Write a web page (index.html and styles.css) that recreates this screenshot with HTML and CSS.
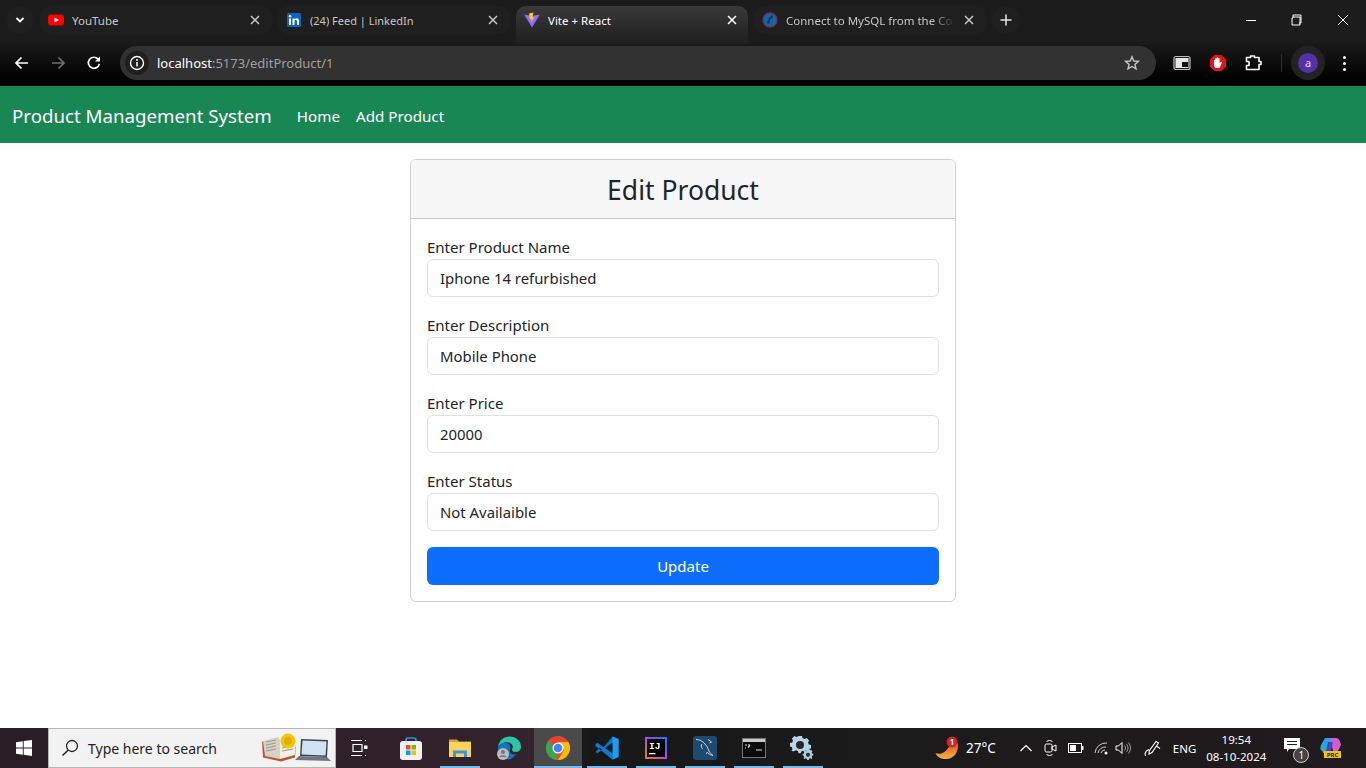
FILE: index.html
```html
<!DOCTYPE html>
<html lang="en">
<head>
<meta charset="utf-8">
<title>Vite + React</title>
<link rel="stylesheet" href="styles.css">
</head>
<body>
<div class="browser">
  <div class="tabstrip">
    <div class="tab-menu"><svg width="12" height="12" viewBox="0 0 12 12"><path d="M2.5 4l3.500 3.500L9.500 4" fill="none" stroke="#fff" stroke-width="1.800"/></svg></div>
    <div class="tab">
      <svg class="fav" width="16" height="16" viewBox="0 0 16 16"><rect y="2.500" width="16" height="11" rx="3" fill="#f00"/><path d="M6.500 5.500v5L11 8z" fill="#fff"/></svg>
      <span class="tab-title">YouTube</span>
      <svg class="tab-x" width="10" height="10" viewBox="0 0 10 10"><path d="M1 1l8 8M9 1l-8 8" stroke="#c7c7c7" stroke-width="1.500"/></svg>
    </div>
    <div class="tab">
      <svg class="fav" width="16" height="16" viewBox="0 0 16 16"><rect x="1" y="1" width="14" height="14" rx="1.500" fill="#0a66c2"/><rect x="3" y="6.500" width="2" height="6.500" fill="#fff"/><circle cx="4" cy="4.300" r="1.200" fill="#fff"/><path d="M6.500 6.500h2v1c.5-.8 1.300-1.200 2.200-1.200 1.700 0 2.300 1.100 2.300 2.900V13h-2V9.600c0-.9-.3-1.500-1.100-1.500-.9 0-1.400.6-1.400 1.600V13h-2z" fill="#fff"/></svg>
      <span class="tab-title tab-title-tight">(24) Feed | LinkedIn</span>
      <svg class="tab-x" width="10" height="10" viewBox="0 0 10 10"><path d="M1 1l8 8M9 1l-8 8" stroke="#c7c7c7" stroke-width="1.500"/></svg>
    </div>
    <div class="tab tab-active">
      <svg class="fav" width="16" height="16" viewBox="0 0 16 16"><path d="M0 2.500L8 4l8-1.500L8 15.500z" fill="#7c6cf5"/><path d="M1.500 3.200L8 4.300l6.500-1.100L8 13.500z" fill="#9a6af0"/><path d="M9.500.5L5 1.500l.8 6 1.700-.4-.5 3.500 3.500-5.500-2 .4z" fill="#ffc81f"/></svg>
      <span class="tab-title">Vite + React</span>
      <svg class="tab-x" width="10" height="10" viewBox="0 0 10 10"><path d="M1 1l8 8M9 1l-8 8" stroke="#fff" stroke-width="1.500"/></svg>
    </div>
    <div class="tab">
      <svg class="fav" width="16" height="16" viewBox="0 0 16 16"><circle cx="8" cy="8" r="7.200" fill="#0f66a8" stroke="#8c2430" stroke-width="1.100"/><path d="M10.500 3L7 6 5 11l2 1 1.500-5 2.500-2z" fill="#0b2e4e"/></svg>
      <span class="tab-title tab-fade">Connect to MySQL from the Co</span>
      <svg class="tab-x" width="10" height="10" viewBox="0 0 10 10"><path d="M1 1l8 8M9 1l-8 8" stroke="#c7c7c7" stroke-width="1.500"/></svg>
    </div>
    <div class="new-tab"><svg width="12" height="12" viewBox="0 0 12 12"><path d="M6 .5v11M.5 6h11" stroke="#e3e3e3" stroke-width="1.500"/></svg></div>
    <div class="win-controls">
      <svg width="46" height="12" viewBox="0 0 46 12"><path d="M18 6.500h10" stroke="#fff"/></svg>
      <svg width="46" height="12" viewBox="0 0 46 12"><path d="M19 3.500h7v8h-8v-7h1V1.500h8v8h-2" transform="translate(0 -.5)" fill="none" stroke="#fff"/></svg>
      <svg width="46" height="12" viewBox="0 0 46 12"><path d="M18 1l10 10M28 1L18 11" stroke="#fff"/></svg>
    </div>
  </div>
  <div class="toolbar">
    <div class="tool"><svg width="16" height="16" viewBox="0 0 16 16"><path d="M14 8H2.500M7.500 2.500L2 8l5.500 5.500" fill="none" stroke="#fff" stroke-width="1.700"/></svg></div>
    <div class="tool"><svg width="16" height="16" viewBox="0 0 16 16"><path d="M2 8h11.500M8.500 2.500L14 8l-5.500 5.500" fill="none" stroke="#6e6e6e" stroke-width="1.700"/></svg></div>
    <div class="tool"><svg width="16" height="16" viewBox="0 0 16 16"><path d="M13.300 8.800a5.500 5.500 0 1 1-1.300-4.700l1.500 1.600" fill="none" stroke="#fff" stroke-width="1.700"/><path d="M14 1.500V6.500H9z" fill="#fff"/></svg></div>
    <div class="omnibox">
      <div class="site-info"><svg width="16" height="16" viewBox="0 0 16 16"><circle cx="8" cy="8" r="6.500" fill="none" stroke="#fff" stroke-width="1.400"/><path d="M8 7v4.500" stroke="#fff" stroke-width="1.500"/><circle cx="8" cy="4.900" r="1" fill="#fff"/></svg></div>
      <div class="url"><span class="url-host">localhost</span>:5173/editProduct/1</div>
      <svg class="star" width="18" height="18" viewBox="0 0 18 18"><path d="M9 2.800l1.800 4.200 4.600.4-3.500 3 1.100 4.500L9 12.500l-4 2.400 1.100-4.500-3.500-3 4.600-.4z" fill="none" stroke="#c7c7c7" stroke-width="1.400"/></svg>
    </div>
    <div class="ext ext-first"><svg width="18" height="16" viewBox="0 0 18 16"><rect x="1" y="1.500" width="16" height="13" rx="2" fill="#1a1a1a" stroke="#bdbdbd" stroke-width="1.200"/><rect x="2.500" y="3" width="13" height="10" fill="#e6e6e6"/><rect x="9" y="7" width="6" height="5" fill="#111"/></svg></div>
    <div class="ext"><svg width="18" height="18" viewBox="0 0 18 18"><path d="M5.500 1h7L17 5.500v7L12.500 17h-7L1 12.500v-7z" fill="#e8101a"/><path d="M5 8.500V6.500c0-1 1.300-1 1.300 0V4.800c0-1 1.400-1 1.400 0V4c0-1 1.500-1 1.500 0v.8c0-1 1.400-1 1.400 0V9l1.200-1c.8-.5 1.500.3 1 1L10.500 14H7.800C6 14 5 12.800 5 11.500z" fill="#fff"/></svg></div>
    <div class="ext"><svg width="18" height="18" viewBox="0 0 18 18"><path d="M1.500 3.500H5.500V2h4v1.500H14V7.500h2v3h-2V15.500H1.500V11.500H4v-4H1.500z" fill="none" stroke="#fff" stroke-width="1.600" stroke-linejoin="round"/></svg></div>
    <div class="tool-divider"></div>
    <div class="avatar-wrap"><div class="avatar">a</div></div>
    <div class="kebab"><i></i><i></i><i></i></div>
  </div>
</div>

<nav class="navbar">
  <a class="brand">Product Management System</a>
  <a class="nav-link">Home</a>
  <a class="nav-link">Add Product</a>
</nav>

<main class="page">
  <section class="card">
    <h3 class="card-header">Edit Product</h3>
    <form class="card-body">
      <label class="field"><span class="label">Enter Product Name</span><input class="input" value="Iphone 14 refurbished"></label>
      <label class="field"><span class="label">Enter Description</span><input class="input" value="Mobile Phone"></label>
      <label class="field"><span class="label">Enter Price</span><input class="input" value="20000"></label>
      <label class="field"><span class="label">Enter Status</span><input class="input" value="Not Availaible"></label>
      <button class="btn" type="button">Update</button>
    </form>
  </section>
</main>

<footer class="taskbar">
  <div class="start"><svg width="16" height="16" viewBox="0 0 16 16"><path d="M0 2.200L6.800 1.200V7.500H0zM7.700 1.100L16 0v7.500H7.700zM0 8.400h6.800v6.400L0 13.800zM7.700 8.400H16V16l-8.300-1.200z" fill="#fff"/></svg></div>
  <div class="search">
    <svg width="20" height="20" viewBox="0 0 20 20"><circle cx="12" cy="8" r="5.500" fill="none" stroke="#222" stroke-width="1.300"/><path d="M8 12.200L2.500 17.500" stroke="#222" stroke-width="1.500"/></svg>
    <span class="search-text">Type here to search</span>
    <svg class="search-art" width="70" height="30" viewBox="0 0 70 30"><path d="M1 8.500l16-2 18 6-1 12-14 4-18-4z" fill="#b8572f"/><path d="M2 8l15-4 2 3 0 19-15-3z" fill="#d6d2c6"/><path d="M19 7l10-3 6 6-1 12-15 4z" fill="#f3efe3"/><path d="M5 9l10-2M5 12l10-2M5 15l10-2M5 18l10-2M21 12l11-2M21 15l11-2M21 18l11-2" stroke="#9c9a90" stroke-width="1.200"/><circle cx="27" cy="8" r="7.500" fill="#f0c808"/><circle cx="27" cy="8" r="4" fill="#e0b000"/><path d="M40 6l27 1-1 17-27-1z" fill="#3c4450"/><path d="M41.500 7.500l24 1-1 14-24-1z" fill="#cfe3f5"/><path d="M38 23l28 1 4 4-36-1z" fill="#6f7681"/></svg>
  </div>
  <div class="tasks">
    <div class="task task-view"><svg width="20" height="16" viewBox="0 0 20 16"><path d="M0 .5h11M0 15.500h11M2 4.500h9v7H2zM14 .5h1M14 15.500h1" fill="none" stroke="#fff" stroke-width="1.200"/><rect x="13" y="5.500" width="3.500" height="3.500" fill="#fff"/></svg></div>
    <div class="task"><svg width="24" height="24" viewBox="0 0 24 24"><path d="M7 6V4a2 2 0 0 1 2-2h6a2 2 0 0 1 2 2v2" fill="none" stroke="#1e9be0" stroke-width="1.700"/><rect x="1" y="5" width="22" height="19" rx="3" fill="#f2f2f2"/><rect x="7" y="9" width="4.500" height="4.500" fill="#ea4f25"/><rect x="12.500" y="9" width="4.500" height="4.500" fill="#7fb800"/><rect x="7" y="14.500" width="4.500" height="4.500" fill="#00a3ee"/><rect x="12.500" y="14.500" width="4.500" height="4.500" fill="#fdb900"/></svg></div>
    <div class="task task-open"><svg width="22" height="20" viewBox="0 0 22 20"><path d="M0 1.500h8l2 2h12v15H0z" fill="#d9a033"/><rect y="4" width="22" height="15" fill="#fbd35c"/><path d="M4 19v-6.500h14V19h-3v-3.500H7V19z" fill="#3a96dd"/></svg></div>
    <div class="task"><svg width="24" height="24" viewBox="0 0 24 24"><path d="M1 11C2 4 7 .5 12.500.5 19 .5 24 5 24 11c0 3-2.500 5-5.500 5-2.500 0-3.500-1-3.500-2.500 0-1 .5-1.500 1-2.500C15 7 11 5.500 7.500 6.500 4.500 7.500 2 9 1 11z" fill="#2bc4a5"/><path d="M1 11c2-4 6-5 9-4 3 1 4 3.500 3 6.500-1 3.500 2 6 6 4.500-2 3.500-5 5.500-8 5.500C5 23.500 .5 18 1 11z" fill="#1173c4"/><circle cx="6" cy="18" r="6" fill="#bcbcbc"/><circle cx="6" cy="16" r="2" fill="#777"/><path d="M2.500 21c.5-2.500 6.500-2.500 7 0z" fill="#777"/></svg></div>
    <div class="task task-active"><svg width="24" height="24" viewBox="0 0 24 24"><circle cx="12" cy="12" r="12" fill="#ea4335"/><path d="M12 12L1.600 18A12 12 0 0 1 3 4.500L8.500 14z" fill="#34a853"/><path d="M1.600 18L8 11.500 12 24A12 12 0 0 1 1.600 18z" fill="#34a853"/><path d="M12 6h10.400A12 12 0 0 1 12 24l6-10z" fill="#fbbc04"/><circle cx="12" cy="12" r="5.500" fill="#fff"/><circle cx="12" cy="12" r="4.300" fill="#4285f4"/></svg></div>
    <div class="task task-open"><svg width="24" height="24" viewBox="0 0 24 24"><path d="M17.500.5L23.500 3v18l-6 2.500L7 13z" fill="#0078c8"/><path d="M17.500.5L23.500 3v18l-6 2.500z" fill="#1f9cf0"/><path d="M17.500 6.500v11L10 12z" fill="#111a22"/><path d="M.5 8l2-1.200L17.500 18v5.500L.5 10zM.5 16l2 1.200L7 13.500 5 11.500z" fill="#0e7ad0"/></svg></div>
    <div class="task task-open"><svg width="22" height="22" viewBox="0 0 22 22"><defs><linearGradient id="ij" x1="0" y1="1" x2="1" y2="0"><stop offset="0" stop-color="#f97a12"/><stop offset=".5" stop-color="#b345f1"/><stop offset="1" stop-color="#087cfa"/></linearGradient></defs><rect width="22" height="22" fill="url(#ij)"/><rect x="2" y="2" width="18" height="18" fill="#000"/><text x="4" y="12" class="ij-mark">IJ</text><rect x="4" y="16" width="6.500" height="1.300" fill="#fff"/></svg></div>
    <div class="task task-open"><svg width="24" height="24" viewBox="0 0 24 24"><rect width="24" height="24" rx="3" fill="#1d4a6e"/><path d="M3 3.500c3 0 5 1 7 2.500 3 2.500 5 6 6 9 1 2 2.500 3.500 4 4.500-2-.5-3.500-1-5-2.500-1-1-1.500-.5-1.500 1M9 8c-1 1-1 3 .5 5M15 3.500l3.500 2.500-2 1" fill="none" stroke="#c6d5e2" stroke-width="1"/></svg></div>
    <div class="task task-open"><svg width="24" height="20" viewBox="0 0 24 20"><rect x=".5" y=".5" width="23" height="19" fill="#0c0c0c" stroke="#767676"/><rect x="1" y="1" width="22" height="3" fill="#c9c9c9"/><path d="M3 7h2M3 10h1M6 7h2M6 9.500l2-2M14 12h6" stroke="#ddd" stroke-width="1.100"/></svg></div>
    <div class="task task-open"><svg width="25" height="25" viewBox="0 0 25 25"><path d="M8.500 0h3.500l.6 2.200 2 .8 2-1.100 2.500 2.500-1.100 2 .8 2 2.200.6v3.500l-2.200.6-.8 2-2-.7-2.400.7-1.600-.3-1.500 2.400H8.500l-.6-2.200-2-.8-2 1.100L1.400 15l1.100-2-.8-2L0 10.500V7l2.200-.6.8-2-1.100-2L4.400 0l2 1.100 2-.8z" fill="#b9d4e8"/><circle cx="10" cy="9" r="4" fill="#28272c"/><path d="M18.500 13l1 .3.800 1 1.200-.3.900 1.200-.7 1 .4 1.200 1.200.4v1.500l-1.200.4-.4 1.200.7 1-1.100 1.100-1-.7-1.200.4-.4 1.300h-1.500l-.4-1.300-1.200-.4-1 .7-1.100-1.100.7-1-.4-1.200-1.200-.4v-1.500l1.200-.4.4-1.200-.7-1 1.100-1.100 1 .7 1.200-.5z" fill="#a8cce4"/><circle cx="18" cy="18.700" r="2" fill="#28272c"/></svg></div>
  </div>
  <div class="tray">
    <div class="weather">
      <svg width="24" height="24" viewBox="0 0 24 24"><defs><linearGradient id="moon" x1="0" y1="0" x2="0" y2="1"><stop offset="0" stop-color="#e0522a"/><stop offset="1" stop-color="#f7b43c"/></linearGradient></defs><path d="M23 7c1 9-4 16-12 16-5 0-9-2-10.500-6 4.500 1.500 8 .5 11-3 3-3.500 5-6 11.500-7z" fill="url(#moon)"/><circle cx="17" cy="6" r="5.500" fill="#d6232b"/><text x="17" y="8.500" class="badge-num">1</text></svg>
      <span class="temp">27°C</span>
    </div>
    <svg class="tray-chevron" width="14" height="10" viewBox="0 0 14 10"><path d="M1.500 8L7 2.500 12.500 8" fill="none" stroke="#fff" stroke-width="1.200"/></svg>
    <svg class="tray-meet" width="14" height="18" viewBox="0 0 14 18"><rect x="1" y="5" width="7" height="8" rx="1.500" fill="none" stroke="#fff"/><path d="M8 8l4-2v6l-4-2zM2.500 2.500c2-1.300 4-1.300 6 0M2.500 15.500c2 1.300 4 1.300 6 0" fill="none" stroke="#fff"/></svg>
    <svg class="tray-batt" width="16" height="10" viewBox="0 0 16 10"><rect x=".5" y=".5" width="13" height="9" fill="none" stroke="#fff"/><rect x="2" y="2" width="6" height="6" fill="#fff"/><rect x="14" y="3" width="1.500" height="4" fill="#fff"/></svg>
    <svg class="tray-wifi" width="16" height="14" viewBox="0 0 16 14"><path d="M1 12A11 11 0 0 1 13 2M4 12a7.500 7.500 0 0 1 8-6M7 12a4 4 0 0 1 4-3" fill="none" stroke="#cfcfcf"/><circle cx="12" cy="12" r="1.500" fill="#fff"/></svg>
    <svg class="tray-vol" width="17" height="14" viewBox="0 0 17 14"><path d="M1 5h2.500L7 1.500v11L3.500 9H1z" fill="none" stroke="#fff"/><path d="M9.500 4.500a3.500 3.500 0 0 1 0 5M11.500 3a6 6 0 0 1 0 8M13.500 1.500a8.500 8.500 0 0 1 0 11" fill="none" stroke="#9a9a9a"/></svg>
    <svg class="tray-pen" width="17" height="17" viewBox="0 0 17 17"><path d="M12 1.500l2.500 1.500-6.500 9.500-3 1.500.3-3.300zM12.500 6l3.500 2.500M5 9.500C1.500 10.500 0 14.500 2 15.500" fill="none" stroke="#fff" stroke-width="1.100"/></svg>
    <span class="lang">ENG</span>
    <div class="clock"><span>19:54</span><span>08-10-2024</span></div>
    <div class="notif"><svg width="18" height="16" viewBox="0 0 18 16"><path d="M1 1h16v11H6l-2 3v-3H1z" fill="#fff"/><path d="M4 4.500h10M4 7.500h10" stroke="#222"/></svg><span class="notif-count">1</span></div>
    <div class="copilot"><svg width="22" height="22" viewBox="0 0 22 22"><path d="M5 1h7L8 14H3C0 14 0 11 1 8z" fill="#24a6e8"/><path d="M10 1h6c3 0 4 3 5 7l-3 6h-5z" fill="#cf5fd0"/><path d="M8 5h5l-2 9H6z" fill="#4b3fc2"/><path d="M1 9l3 5h5l-2 2H3z" fill="#57c14a"/><rect x="4" y="14" width="17" height="7" fill="#f4c20d"/><text x="12.500" y="20" class="prc">PRC</text></svg></div>
  </div>
</footer>
</body>
</html>
```

FILE: styles.css
```css
* { box-sizing: border-box; }
html, body { margin: 0; height: 100%; }
body {
  width: 1366px;
  height: 768px;
  overflow: hidden;
  display: flex;
  flex-direction: column;
  background: #fff;
  color: #212529;
  font-family: "Noto Sans", "Liberation Sans", sans-serif;
  font-size: 15px;
}

/* browser chrome */
.browser {
  height: 86px;
  flex: none;
  background: linear-gradient(#1c1c1c 0, #1c1c1c 40px, #000 80px);
  font-family: "Noto Sans", "Liberation Sans", sans-serif;
}
.tabstrip {
  height: 44px;
  display: flex;
  align-items: flex-start;
  padding: 6px 0 0 6px;
  gap: 6px;
}
.tab-menu {
  width: 28px;
  height: 28px;
  border-radius: 50%;
  background: #1f1f1f;
  display: flex;
  align-items: center;
  justify-content: center;
}
.tab {
  width: 232px;
  height: 28px;
  border-radius: 10px;
  background: #1f1f1f;
  display: flex;
  align-items: center;
  padding: 0 12px 0 8px;
  color: #c7c7c7;
  font-size: 11.5px;
}
.fav { flex: none; }
.tab-title { flex: 1; margin-left: 8px; white-space: nowrap; overflow: hidden; }
.tab-title-tight { font-size: 11px; }
.tab-x { flex: none; margin-left: 8px; }
.tab-active {
  height: 38px;
  align-items: flex-start;
  padding: 6px 11px 0 8px;
  border-radius: 10px 10px 0 0;
  background: linear-gradient(#3a3a3a, #1e1e1e);
  color: #fff;
}
.tab-active .tab-x { margin-top: 3px; }
.tab-active .tab-title { line-height: 17px; }
.tab-fade {
  -webkit-mask-image: linear-gradient(90deg, #000 85%, transparent);
  mask-image: linear-gradient(90deg, #000 85%, transparent);
}
.new-tab {
  width: 28px;
  height: 28px;
  border-radius: 50%;
  background: #1f1f1f;
  display: flex;
  align-items: center;
  justify-content: center;
}
.win-controls {
  margin-left: auto;
  height: 28px;
  display: flex;
  align-items: center;
}

.toolbar {
  height: 42px;
  display: flex;
  align-items: flex-start;
  padding: 2px 0 0 4px;
}
.tool {
  width: 36px;
  height: 34px;
  display: flex;
  align-items: center;
  justify-content: center;
}
.omnibox {
  width: 1036px;
  height: 34px;
  margin-left: 8px;
  border-radius: 17px;
  background: #323232;
  display: flex;
  align-items: center;
  padding: 0 15px 0 5px;
}
.site-info {
  width: 24px;
  height: 24px;
  border-radius: 50%;
  background: #1f1f1f;
  display: flex;
  align-items: center;
  justify-content: center;
}
.url { flex: 1; margin-left: 8px; color: #a0a0a0; font-size: 13px; }
.url-host { color: #fff; }
.ext {
  width: 36px;
  height: 34px;
  display: flex;
  align-items: center;
  justify-content: center;
}
.ext-first { margin-left: 8px; }
.tool-divider { width: 1px; height: 18px; margin: 8px 9px 0; background: #2e2e2e; }
.avatar-wrap {
  width: 34px;
  height: 34px;
  border-radius: 50%;
  background: #232323;
  display: flex;
  align-items: center;
  justify-content: center;
}
.avatar {
  width: 20px;
  height: 20px;
  border-radius: 50%;
  background: #5331a8;
  color: #e6dcff;
  font-size: 11px;
  line-height: 19px;
  text-align: center;
}
.kebab {
  width: 36px;
  height: 34px;
  margin-left: 1px;
  display: flex;
  flex-direction: column;
  align-items: center;
  justify-content: center;
  gap: 3px;
}
.kebab i { width: 3px; height: 3px; border-radius: 50%; background: #fff; }

/* navbar */
.navbar {
  height: 57px;
  flex: none;
  background: #198754;
  display: flex;
  align-items: center;
  padding: 2px 12px 0;
  color: #fff;
}
.brand { font-size: 18.700px; margin-right: 25px; }
.nav-link { font-size: 15.200px; margin-right: 16px; }

/* card */
.page { flex: 1; padding-top: 16px; }
.card {
  width: 546px;
  margin: 0 auto;
  border: 1px solid rgba(0, 0, 0, .175);
  border-radius: 6px;
  overflow: hidden;
}
.card-header {
  margin: 0;
  height: 59px;
  background: #f7f7f7;
  border-bottom: 1px solid rgba(0, 0, 0, .175);
  font-size: 26.500px;
  font-weight: 400;
  line-height: 60px;
  text-align: center;
}
.card-body { padding: 16px; display: flex; flex-direction: column; }
.field { display: block; margin-bottom: 16px; }
.label { display: block; height: 24px; line-height: 24px; font-size: 15px; }
.input {
  display: block;
  width: 100%;
  height: 38px;
  padding: 0 12px;
  border: 1px solid #dee2e6;
  border-radius: 6px;
  background: #fff;
  color: #212529;
  font: inherit;
  font-size: 14.900px;
}
.btn {
  height: 38px;
  border: 0;
  border-radius: 6px;
  background: #0d6efd;
  color: #fff;
  font: inherit;
  font-size: 15px;
}

/* taskbar */
.taskbar {
  height: 40px;
  flex: none;
  display: flex;
  align-items: center;
  background: linear-gradient(90deg, #2a1c24 0, #33232c 530px, #181818 590px, #1a1a1a 820px, #211b1e 1366px);
  color: #fff;
}
.start { width: 48px; height: 40px; display: flex; align-items: center; justify-content: center; }
.search {
  width: 288px;
  height: 40px;
  background: #f2f2f2;
  border: 1px solid #b5b5b5;
  display: flex;
  align-items: center;
  padding-left: 11px;
  color: #1f1f1f;
  font-size: 14px;
}
.search-text { margin-left: 8px; }
.search-art { margin-left: auto; margin-right: 4px; }
.tasks { display: flex; height: 40px; }
.task {
  width: 49px;
  height: 40px;
  position: relative;
  display: flex;
  align-items: center;
  justify-content: center;
}
.task-view { width: 50px; }
.task-open::after, .task-active::after {
  content: "";
  position: absolute;
  bottom: 0;
  left: 5px;
  right: 4px;
  height: 2px;
  background: #76b9ed;
}
.task-active {
  background: #4a4a4a;
  background-clip: padding-box;
  border-left: 1px solid transparent;
}
.task-active::after { left: 0; right: 0; }
.ij-mark { fill: #fff; font-family: "Liberation Mono", monospace; font-size: 9.500px; font-weight: 700; }
.tray { flex: 1; display: flex; align-items: center; height: 40px; font-size: 13px; }
.weather { display: flex; align-items: center; margin-left: 108px; }
.temp { margin-left: 7px; font-size: 13.500px; }
.badge-num { fill: #fff; font-size: 8px; text-anchor: middle; font-weight: 700; }
.tray-chevron { margin-left: 23px; }
.tray-meet { margin-left: 11px; }
.tray-batt { margin-left: 10px; }
.tray-wifi { margin-left: 10px; }
.tray-vol { margin-left: 5px; }
.tray-pen { margin-left: 12px; }
.lang { margin-left: 12px; font-size: 11.500px; }
.clock {
  width: 70px;
  margin-left: 5px;
  display: flex;
  flex-direction: column;
  align-items: center;
  font-size: 11.500px;
  line-height: 17px;
}
.notif { margin-left: 12px; position: relative; width: 26px; height: 26px; padding-top: 2px; }
.notif-count {
  position: absolute;
  right: 0;
  bottom: -2px;
  width: 16px;
  height: 16px;
  border-radius: 50%;
  border: 1px solid #ccc;
  background: #444;
  font-size: 10px;
  line-height: 14px;
  text-align: center;
}
.copilot { margin-left: 11px; height: 22px; }
.prc { fill: #222; font-size: 6px; font-weight: 700; text-anchor: middle; }
```
